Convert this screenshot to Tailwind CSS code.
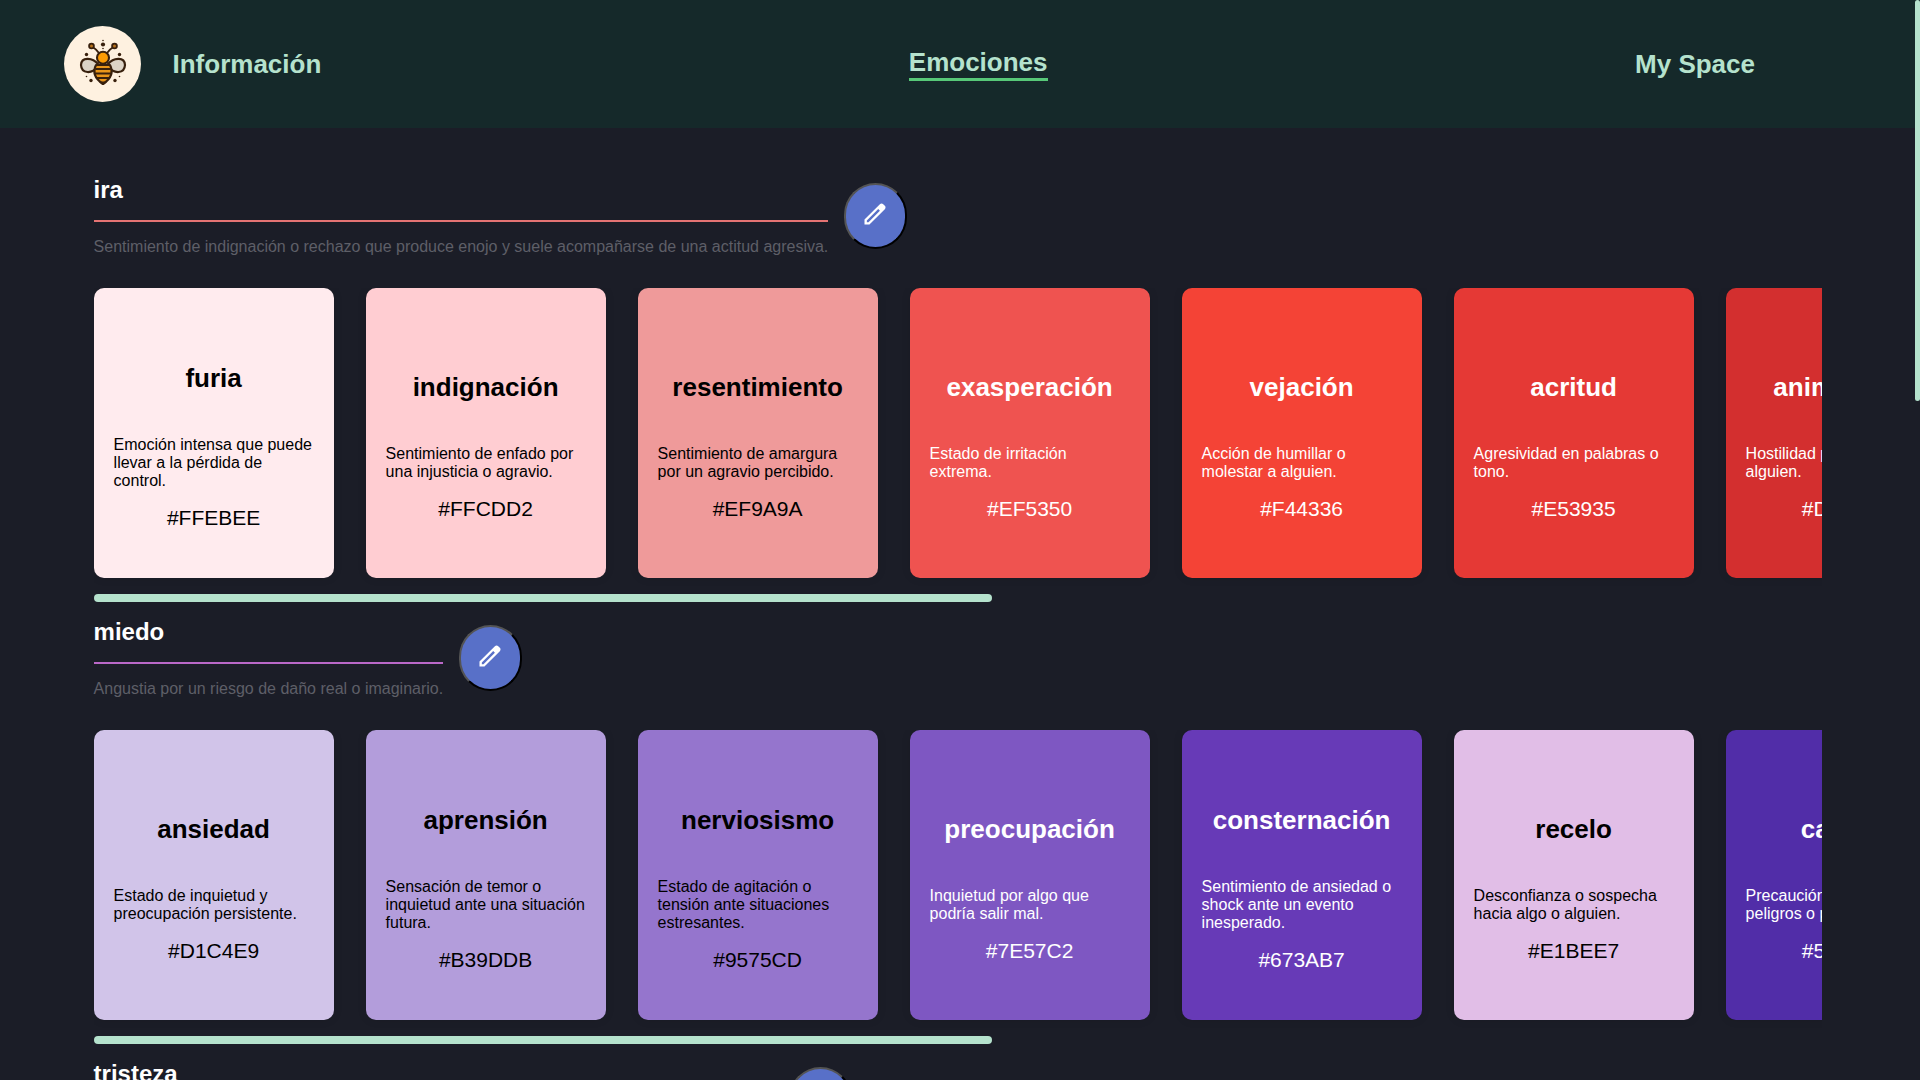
<!DOCTYPE html>
<html lang="es">
<head>
<meta charset="utf-8">
<title>Emociones</title>
<script src="https://cdn.jsdelivr.net/npm/@tailwindcss/browser@4"></script>
</head>
<body class="relative h-[1080px] w-[1920px] overflow-hidden bg-[#1b1d27] font-['Liberation_Sans',Arial,sans-serif] text-white">
<header class="flex h-32 items-center justify-between bg-[#15292a] pl-16 pr-[165px] text-[26px] leading-[30px] font-bold text-[#b5e2cd]">
  <div class="flex items-center gap-[31.500px]">
    <svg class="h-[76px] w-[77px]" viewBox="0 0 77 76">
      <ellipse cx="38.5" cy="38" rx="38.5" ry="38" fill="#fef1e0"/>
      <g stroke="#38200d" stroke-linecap="round" stroke-linejoin="round">
        <path d="M34.500 26.500Q32 23 28.500 21M43.500 26.500Q46 23 49.500 21" fill="none" stroke-width="1.900"/>
        <circle cx="27.500" cy="20" r="2.400" fill="#b8721c" stroke-width="1.800"/>
        <circle cx="50.500" cy="20" r="2.400" fill="#b8721c" stroke-width="1.800"/>
        <path d="M34 38C29 32 17.500 30 17 39C17.500 48 28 48 33.500 41Z" fill="#dcd3c6" stroke-width="2.200"/>
        <path d="M44 38C49 32 60.500 30 61 39C60.500 48 50 48 44.500 41Z" fill="#dcd3c6" stroke-width="2.200"/>
        <path d="M32 39C29 45 30 52 39 58C48 52 49 45 46 39Z" fill="#e8951a" stroke-width="2.200"/>
        <path d="M32 43H46M31.500 47.500H46.500M33 52H45" stroke-width="2.100" fill="none"/>
        <path d="M36 56H42L39 58.500Z" fill="#38200d" stroke-width="1.200"/>
        <circle cx="39" cy="31.700" r="6" fill="#fb9b05" stroke-width="2.100"/>
      </g>
      <g fill="#38200d">
        <circle cx="39" cy="18.500" r="2.100"/><circle cx="39" cy="14.500" r=".8"/><circle cx="39" cy="22.500" r=".8"/>
        <circle cx="22.500" cy="28.500" r="1.700"/><circle cx="55.500" cy="28.500" r="1.700"/>
        <circle cx="27" cy="54.500" r="1.700"/><circle cx="51" cy="54.500" r="1.700"/>
        <circle cx="22.500" cy="50.500" r=".8"/><circle cx="55.500" cy="50.500" r=".8"/>
      </g>
    </svg>
    <a>Información</a>
  </div>
  <a class="border-b-[3px] border-[#57c878] pb-px">Emociones</a>
  <a>My Space</a>
</header>
<main id="list" class="flex h-[952px] flex-col overflow-hidden pl-[93.600px] pr-[98px] pt-[43px]"></main>
<div class="absolute right-0 top-0 h-[401px] w-[5px] rounded-full bg-[#b5e2cd]"></div>
<script>
const sections = [
  ['ira', 'Sentimiento de indignación o rechazo que produce enojo y suele acompañarse de una actitud agresiva.', '#e57373', [
    ['furia', 'Emoción intensa que puede llevar a la pérdida de control.', '#FFEBEE', 0],
    ['indignación', 'Sentimiento de enfado por una injusticia o agravio.', '#FFCDD2', 0],
    ['resentimiento', 'Sentimiento de amargura por un agravio percibido.', '#EF9A9A', 0],
    ['exasperación', 'Estado de irritación extrema.', '#EF5350', 1],
    ['vejación', 'Acción de humillar o molestar a alguien.', '#F44336', 1],
    ['acritud', 'Agresividad en palabras o tono.', '#E53935', 1],
    ['animosidad', 'Hostilidad persistente hacia alguien.', '#D32F2F', 1]]],
  ['miedo', 'Angustia por un riesgo de daño real o imaginario.', '#ba68c8', [
    ['ansiedad', 'Estado de inquietud y preocupación persistente.', '#D1C4E9', 0],
    ['aprensión', 'Sensación de temor o inquietud ante una situación futura.', '#B39DDB', 0],
    ['nerviosismo', 'Estado de agitación o tensión ante situaciones estresantes.', '#9575CD', 0],
    ['preocupación', 'Inquietud por algo que podría salir mal.', '#7E57C2', 1],
    ['consternación', 'Sentimiento de ansiedad o shock ante un evento inesperado.', '#673AB7', 1],
    ['recelo', 'Desconfianza o sospecha hacia algo o alguien.', '#E1BEE7', 0],
    ['cautela', 'Precaución ante posibles peligros o problemas.', '#512DA8', 1]]],
  ['tristeza', 'Sentimiento de dolor emocional causado por una pérdida, una desilusión o una desgracia.', '#64b5f6', []]
];
const card = ([name, text, color, light]) => `
  <article class="flex h-[290px] w-60 shrink-0 flex-col items-center justify-center rounded-[10px] px-5 pt-[27px] shadow-[0_0_10px_rgba(0,0,0,0.1)] ${light ? 'text-white' : 'text-black'}" style="background:${color}">
    <h3 class="text-[26px] leading-[30px] font-bold">${name}</h3>
    <p class="mt-[43px] w-full text-base leading-[18px]">${text}</p>
    <p class="mt-4 text-[21px] leading-6">${color}</p>
  </article>`;
document.getElementById('list').innerHTML = sections.map(([title, text, line, cards]) => `
  <section class="h-[442px] shrink-0">
    <div class="flex h-[85px] gap-4">
      <div class="${title === 'tristeza' ? 'w-[679px] whitespace-nowrap' : ''}">
        <h2 class="pt-[5px] text-2xl leading-7 font-bold">${title}</h2>
        <hr class="mt-4 border-0 border-t-2" style="border-color:${line}">
        <p class="mt-4 text-base leading-[18px] text-[#5e5f67]">${text}</p>
      </div>
      <button class="mt-3 flex h-[66px] w-[63px] items-center justify-center rounded-full border-2 border-black bg-[#5870c8] pr-px pb-1 [border-style:outset]">
        <svg class="h-7 w-7" viewBox="0 -960 960 960" fill="#fff"><path d="M200-200h57l391-391-57-57-391 391v57Zm-80 80v-170l528-527q12-11 26.500-17t30.500-6q16 0 31 6t26 18l55 56q12 11 17.500 26t5.500 30q0 16-5.500 30.500T817-647L290-120H120Z"/></svg>
      </button>
    </div>
    <div class="mt-8 flex gap-8 overflow-hidden pb-4">${cards.map(card).join('')}</div>
    <div class="h-2 w-[898px] rounded-full bg-[#b5e2cd]"></div>
  </section>`).join('');
</script>
</body>
</html>
